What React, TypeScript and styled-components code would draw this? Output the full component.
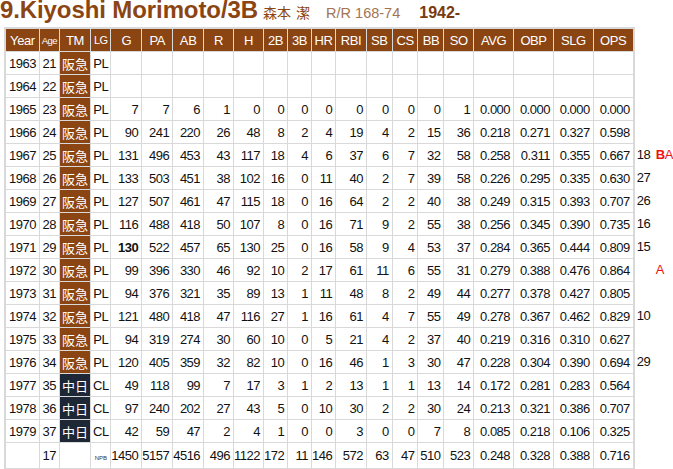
import React from "react";
import styled, { createGlobalStyle } from "styled-components";

const GlobalStyle = createGlobalStyle`
  html, body { margin: 0; padding: 0; background: #fff; }
  body { font-family: "Liberation Sans", Arial, sans-serif; color: #111; }
`;

const BROWN = "#8b4513";
const NAVY = "#1d2735";
const GRID = "#d9d9d9";

type Col = { key: string; label: string; w: number; small?: "age" | "lg" };

const cols: Col[] = [
  { key: "year", label: "Year", w: 34 },
  { key: "age", label: "Age", w: 20, small: "age" },
  { key: "tm", label: "TM", w: 32 },
  { key: "lg", label: "LG", w: 20, small: "lg" },
  { key: "g", label: "G", w: 31 },
  { key: "pa", label: "PA", w: 30 },
  { key: "ab", label: "AB", w: 30 },
  { key: "r", label: "R", w: 30 },
  { key: "h", label: "H", w: 30 },
  { key: "2b", label: "2B", w: 24 },
  { key: "3b", label: "3B", w: 24 },
  { key: "hr", label: "HR", w: 23 },
  { key: "rbi", label: "RBI", w: 31 },
  { key: "sb", label: "SB", w: 26 },
  { key: "cs", label: "CS", w: 26 },
  { key: "bb", label: "BB", w: 26 },
  { key: "so", label: "SO", w: 30 },
  { key: "avg", label: "AVG", w: 40 },
  { key: "obp", label: "OBP", w: 40 },
  { key: "slg", label: "SLG", w: 40 },
  { key: "ops", label: "OPS", w: 39 },
];

type Row = {
  year: string;
  age: string;
  team: "阪急" | "中日";
  lg: string;
  stats: (string | number)[];
  boldG?: boolean;
  num?: string;
  award?: { b?: boolean; a?: boolean };
};

const H = "阪急" as const;
const C = "中日" as const;

const rows: Row[] = [
  { year: "1963", age: "21", team: H, lg: "PL", stats: [] },
  { year: "1964", age: "22", team: H, lg: "PL", stats: [] },
  { year: "1965", age: "23", team: H, lg: "PL", stats: [7, 7, 6, 1, 0, 0, 0, 0, 0, 0, 0, 0, 1, "0.000", "0.000", "0.000", "0.000"] },
  { year: "1966", age: "24", team: H, lg: "PL", stats: [90, 241, 220, 26, 48, 8, 2, 4, 19, 4, 2, 15, 36, "0.218", "0.271", "0.327", "0.598"] },
  { year: "1967", age: "25", team: H, lg: "PL", stats: [131, 496, 453, 43, 117, 18, 4, 6, 37, 6, 7, 32, 58, "0.258", "0.311", "0.355", "0.667"], num: "18", award: { b: true, a: true } },
  { year: "1968", age: "26", team: H, lg: "PL", stats: [133, 503, 451, 38, 102, 16, 0, 11, 40, 2, 7, 39, 58, "0.226", "0.295", "0.335", "0.630"], num: "27" },
  { year: "1969", age: "27", team: H, lg: "PL", stats: [127, 507, 461, 47, 115, 18, 0, 16, 64, 2, 2, 40, 38, "0.249", "0.315", "0.393", "0.707"], num: "26" },
  { year: "1970", age: "28", team: H, lg: "PL", stats: [116, 488, 418, 50, 107, 8, 0, 16, 71, 9, 2, 55, 38, "0.256", "0.345", "0.390", "0.735"], num: "16" },
  { year: "1971", age: "29", team: H, lg: "PL", stats: [130, 522, 457, 65, 130, 25, 0, 16, 58, 9, 4, 53, 37, "0.284", "0.365", "0.444", "0.809"], boldG: true, num: "15" },
  { year: "1972", age: "30", team: H, lg: "PL", stats: [99, 396, 330, 46, 92, 10, 2, 17, 61, 11, 6, 55, 31, "0.279", "0.388", "0.476", "0.864"], award: { a: true } },
  { year: "1973", age: "31", team: H, lg: "PL", stats: [94, 376, 321, 35, 89, 13, 1, 11, 48, 8, 2, 49, 44, "0.277", "0.378", "0.427", "0.805"] },
  { year: "1974", age: "32", team: H, lg: "PL", stats: [121, 480, 418, 47, 116, 27, 1, 16, 61, 4, 7, 55, 49, "0.278", "0.367", "0.462", "0.829"], num: "10" },
  { year: "1975", age: "33", team: H, lg: "PL", stats: [94, 319, 274, 30, 60, 10, 0, 5, 21, 4, 2, 37, 40, "0.219", "0.316", "0.310", "0.627"] },
  { year: "1976", age: "34", team: H, lg: "PL", stats: [120, 405, 359, 32, 82, 10, 0, 16, 46, 1, 3, 30, 47, "0.228", "0.304", "0.390", "0.694"], num: "29" },
  { year: "1977", age: "35", team: C, lg: "CL", stats: [49, 118, 99, 7, 17, 3, 1, 2, 13, 1, 1, 13, 14, "0.172", "0.281", "0.283", "0.564"] },
  { year: "1978", age: "36", team: C, lg: "CL", stats: [97, 240, 202, 27, 43, 5, 0, 10, 30, 2, 2, 30, 24, "0.213", "0.321", "0.386", "0.707"] },
  { year: "1979", age: "37", team: C, lg: "CL", stats: [42, 59, 47, 2, 4, 1, 0, 0, 3, 0, 0, 7, 8, "0.085", "0.218", "0.106", "0.325"] },
];

const totals = [1450, 5157, 4516, 496, 1122, 172, 11, 146, 572, 63, 47, 510, 523, "0.248", "0.328", "0.388", "0.716"];

const Page = styled.div`
  width: 673px;
`;

const TitleRow = styled.div`
  display: flex;
  align-items: baseline;
  height: 27px;
  line-height: 20px;
  white-space: nowrap;
`;

const Title = styled.h1`
  margin: 0;
  font-size: 24px;
  font-weight: bold;
  color: ${BROWN};
  letter-spacing: -0.1px;
`;

const JaName = styled.span`
  margin-left: 5px;
  font-family: "Noto Sans CJK JP", sans-serif;
  font-size: 14px;
  color: ${BROWN};
  word-spacing: 2px;
`;

const Bats = styled.span`
  margin-left: 16px;
  font-size: 14.5px;
  color: #a37452;
`;

const Born = styled.span`
  margin-left: 19px;
  font-size: 16px;
  font-weight: bold;
  color: #7a3a10;
`;

const Body = styled.div`
  display: flex;
  align-items: flex-start;
  padding-left: 4px;
`;

const Table = styled.table`
  border-collapse: separate;
  border-spacing: 0;
  table-layout: fixed;
  border: 2px solid ${GRID};
  font-size: 13px;
  letter-spacing: -0.5px;
`;

const Th = styled.th<{ $w: number; $small?: "age" | "lg"; $last?: boolean }>`
  box-sizing: border-box;
  width: ${(p) => p.$w}px;
  height: 23px;
  padding: 0;
  background: ${BROWN};
  color: #fff;
  font-weight: normal;
  font-size: ${(p) => (p.$small === "age" ? "9.5px" : p.$small === "lg" ? "11px" : "13px")};
  letter-spacing: ${(p) => (p.$small === "age" ? "-0.6px" : "-0.4px")};
  text-align: center;
  border-right: ${(p) => (p.$last ? "none" : `1px solid ${GRID}`)};
  border-bottom: 1px solid ${GRID};
`;

const Td = styled.td<{ $align?: "center" | "right"; $last?: boolean; $bold?: boolean; $tall?: boolean }>`
  box-sizing: border-box;
  height: ${(p) => (p.$tall ? "25px" : "23px")};
  padding: 0 3px 0 0;
  text-align: ${(p) => p.$align || "right"};
  font-weight: ${(p) => (p.$bold ? "bold" : "normal")};
  color: #111;
  white-space: nowrap;
  border-right: ${(p) => (p.$last ? "none" : `1px solid ${GRID}`)};
  border-bottom: ${(p) => (p.$tall ? "none" : `1px solid ${GRID}`)};
  ${(p) => (p.$align === "center" ? "padding: 0;" : "")}
`;

const TeamTd = styled.td<{ $team: "阪急" | "中日" }>`
  box-sizing: border-box;
  height: 23px;
  padding: 0;
  text-align: center;
  background: ${(p) => (p.$team === "中日" ? NAVY : BROWN)};
  color: #fff;
  font-family: "Noto Sans CJK JP", sans-serif;
  font-size: 13px;
  letter-spacing: 0;
  border-right: 1px solid ${GRID};
  border-bottom: 1px solid ${GRID};
`;

const NpbTag = styled.span`
  font-size: 6px;
  letter-spacing: 0;
  color: #333;
`;

const Side = styled.div`
  display: flex;
  flex-direction: column;
  padding-top: 25px;
`;

const SideRow = styled.div`
  display: flex;
  height: 23px;
  line-height: 21px;
  font-size: 13px;
  letter-spacing: -0.4px;
`;

const SideNum = styled.span`
  width: 19px;
  padding-left: 2px;
  color: #111;
`;

const Award = styled.span<{ $bold?: boolean }>`
  color: #ee1111;
  font-weight: ${(p) => (p.$bold ? "bold" : "normal")};
`;

export default function App() {
  return (
    <Page>
      <GlobalStyle />
      <TitleRow>
        <Title>9.Kiyoshi Morimoto/3B</Title>
        <JaName>森本 潔</JaName>
        <Bats>R/R 168-74</Bats>
        <Born>1942-</Born>
      </TitleRow>
      <Body>
        <Table>
          <thead>
            <tr>
              {cols.map((c, i) => (
                <Th key={c.key} $w={c.w} $small={c.small} $last={i === cols.length - 1}>
                  {c.label}
                </Th>
              ))}
            </tr>
          </thead>
          <tbody>
            {rows.map((r) => (
              <tr key={r.year}>
                <Td $align="center">{r.year}</Td>
                <Td $align="center">{r.age}</Td>
                <TeamTd $team={r.team}>{r.team}</TeamTd>
                <Td $align="center">{r.lg}</Td>
                {cols.slice(4).map((c, i) => (
                  <Td key={c.key} $last={i === cols.length - 5} $bold={r.boldG && i === 0}>
                    {r.stats[i] ?? ""}
                  </Td>
                ))}
              </tr>
            ))}
            <tr>
              <Td $align="center" $tall />
              <Td $align="center" $tall>17</Td>
              <Td $align="center" $tall />
              <Td $align="center" $tall>
                <NpbTag>NPB</NpbTag>
              </Td>
              {totals.map((v, i) => (
                <Td key={i} $tall $last={i === totals.length - 1}>
                  {v}
                </Td>
              ))}
            </tr>
          </tbody>
        </Table>
        <Side>
          {rows.map((r) => (
            <SideRow key={r.year}>
              <SideNum>{r.num ?? ""}</SideNum>
              {r.award?.b && <Award $bold>B</Award>}
              {r.award?.a && <Award>A</Award>}
            </SideRow>
          ))}
        </Side>
      </Body>
    </Page>
  );
}
